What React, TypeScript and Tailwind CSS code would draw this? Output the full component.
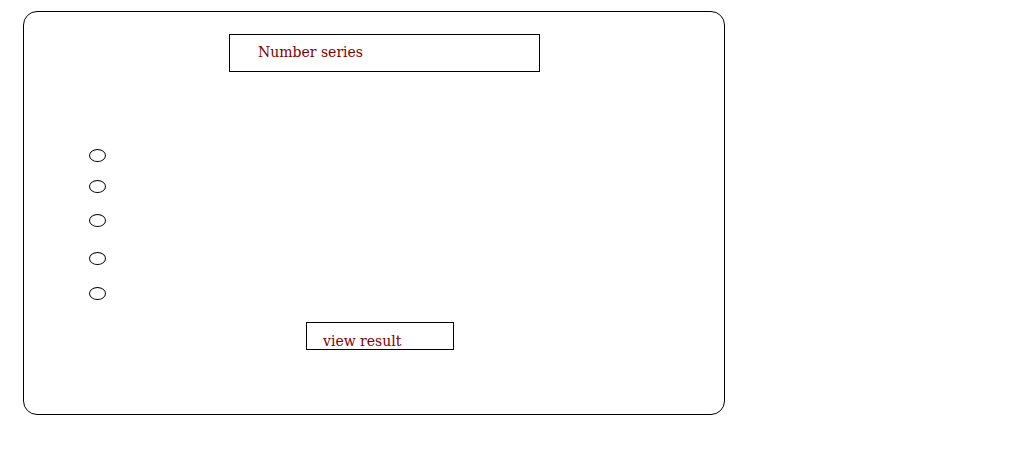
export default function App() {
  const tops = ["mt-[77px]", "mt-[18px]", "mt-[21px]", "mt-[25px]", "mt-[22px]"];
  return (
    <div className="w-[1023px] h-[475px] bg-white pl-[23px] pt-[11px]" style={{ fontFamily: '"DejaVu Serif", Georgia, serif' }}>
      <div className="w-[702px] h-[404px] border border-black rounded-[14px] flex flex-col">
        <div className="ml-[205px] mt-[22px] w-[311px] h-[38px] border border-black flex items-center pl-[28px] pb-[2px]">
          <span className="text-[#800000] text-[14px] leading-none">Number series</span>
        </div>
        {tops.map((t, i) => (
          <div key={i} className={`${t} ml-[65px] w-[17px] h-[13px] border border-black rounded-[50%]`} />
        ))}
        <div className="ml-[282px] mt-[22px] w-[148px] h-[28px] border border-black flex items-end pl-[16px] overflow-hidden">
          <span className="text-[#800000] text-[14px] leading-none pb-[1px]">view result</span>
        </div>
      </div>
    </div>
  );
}
